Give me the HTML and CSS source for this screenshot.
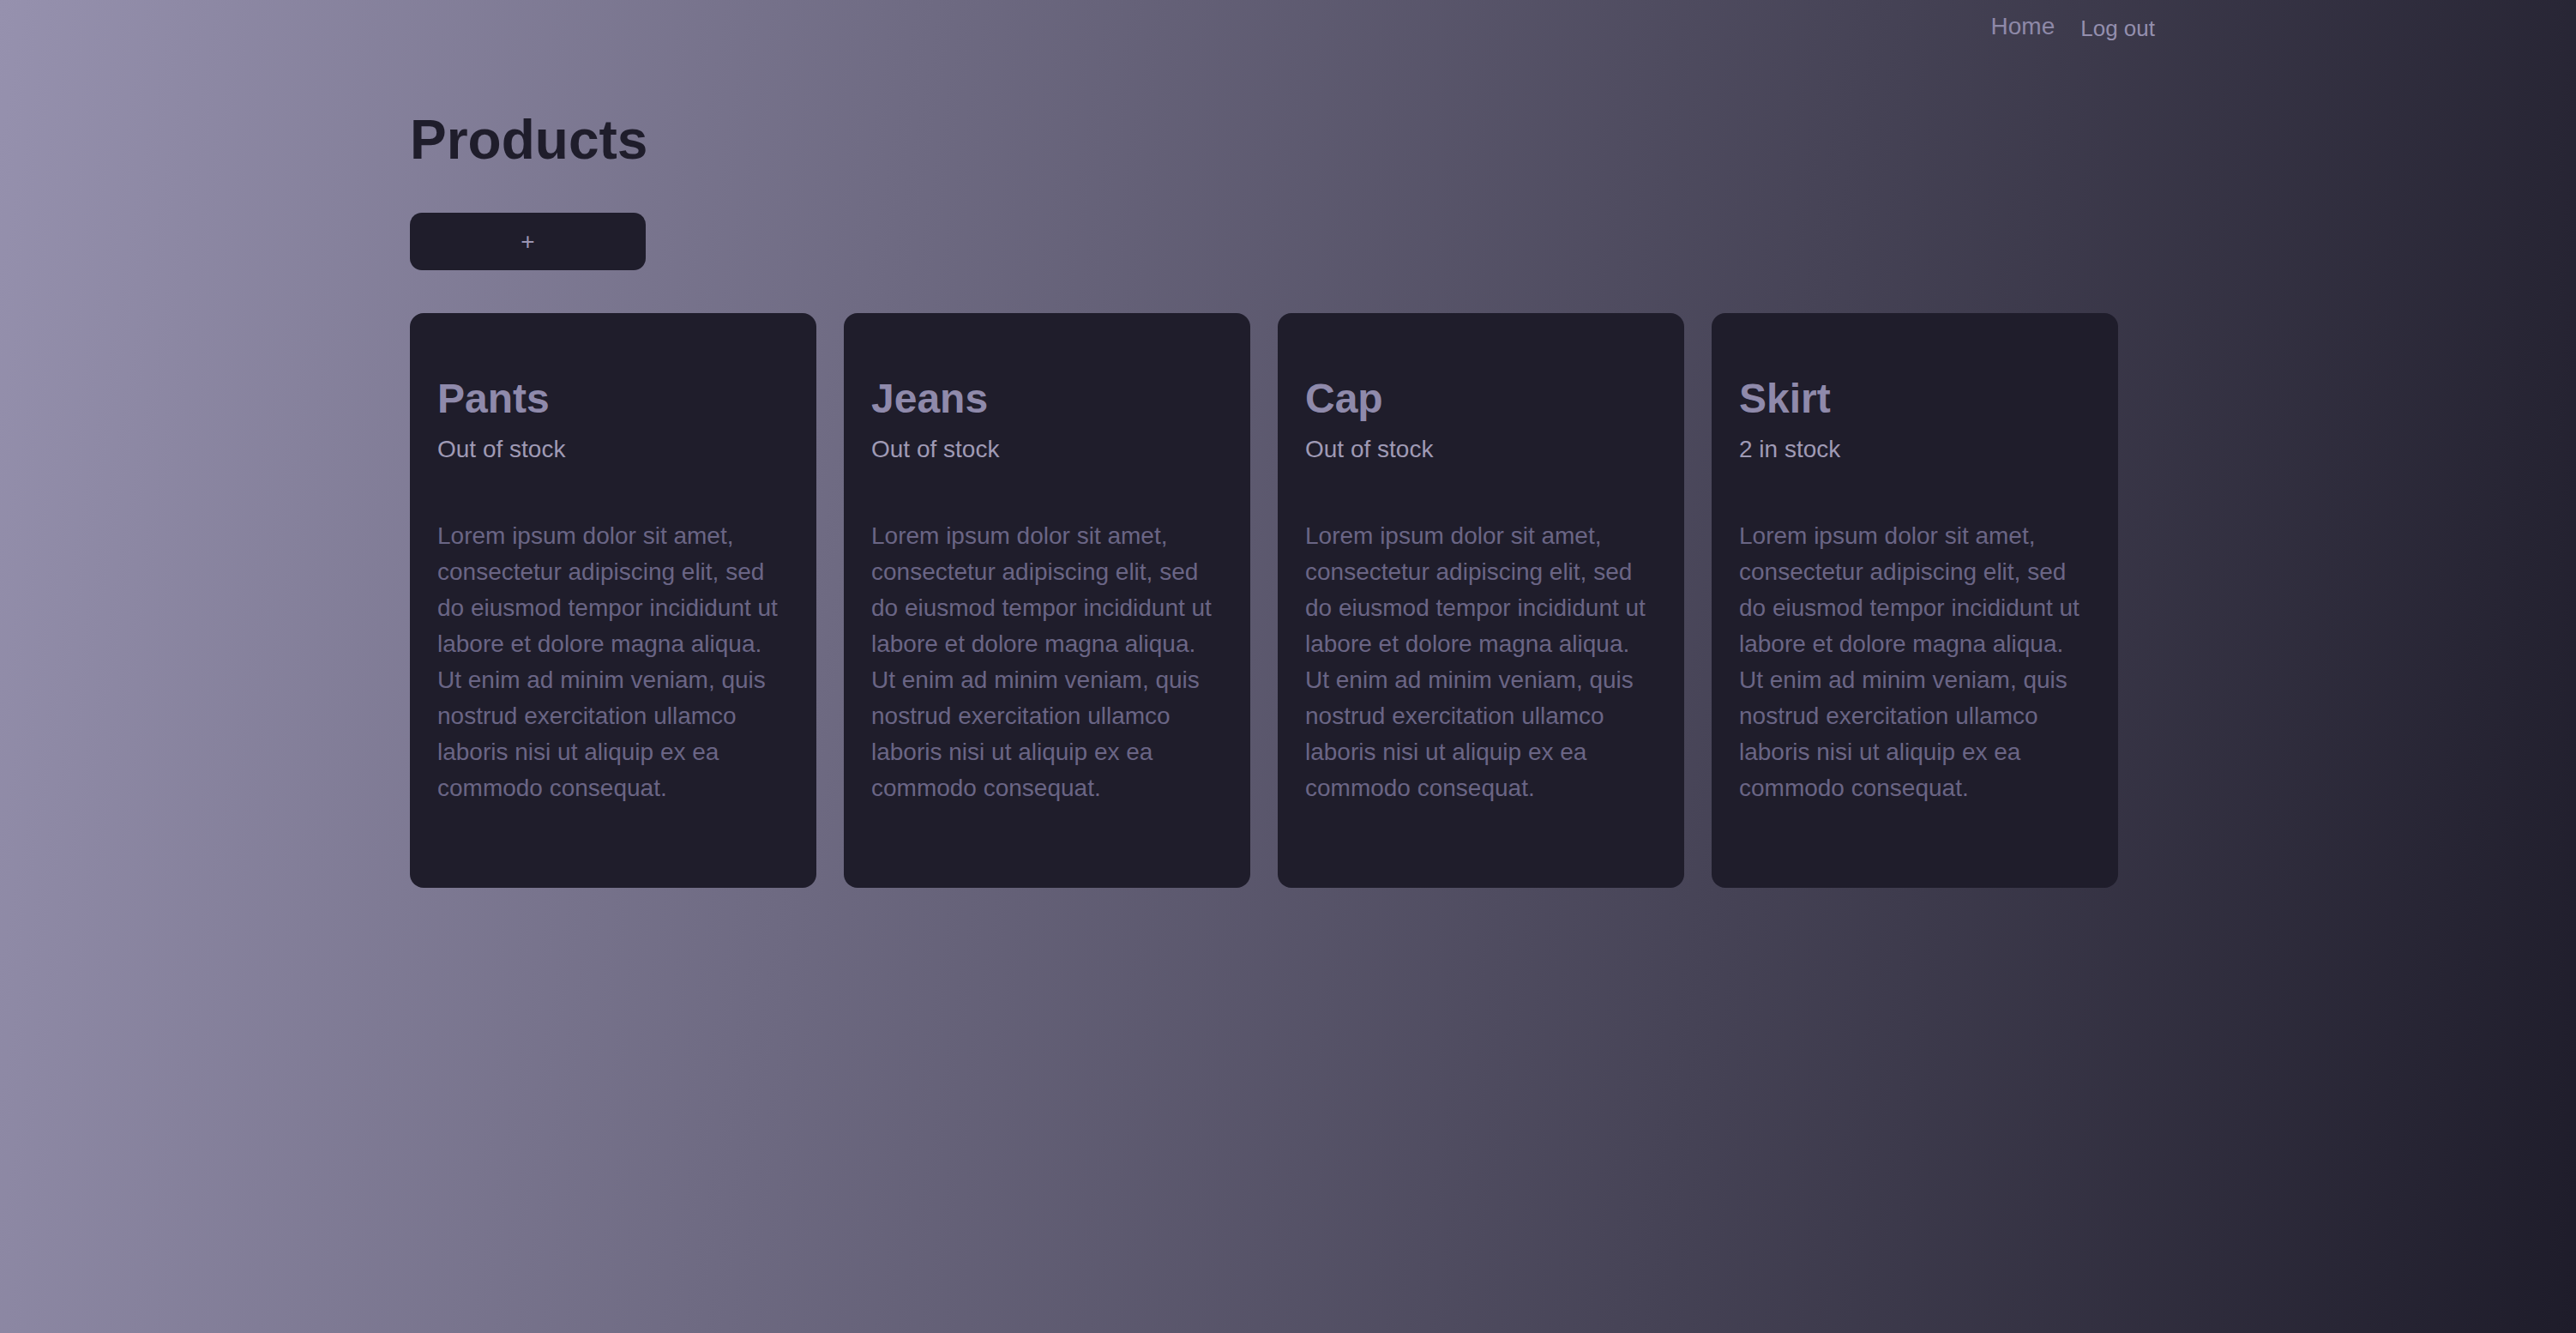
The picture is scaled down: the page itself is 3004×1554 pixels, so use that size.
FILE: index.html
```html
<!DOCTYPE html>
<html lang="en">
<head>
<meta charset="utf-8">
<title>Products</title>
<link rel="stylesheet" href="styles.css">
</head>
<body>
<header class="nav">
  <div class="nav-inner">
    <a class="nav-link" href="#">Home</a>
    <button class="nav-btn" type="button">Log out</button>
  </div>
</header>
<main class="page">
  <h1 class="title">Products</h1>
  <button class="add-btn" type="button">+</button>
  <section class="grid">
    <article class="card">
      <h2 class="card-title">Pants</h2>
      <div class="card-stock">Out of stock</div>
      <p class="card-text">Lorem ipsum dolor sit amet, consectetur adipiscing elit, sed do eiusmod tempor incididunt ut labore et dolore magna aliqua. Ut enim ad minim veniam, quis nostrud exercitation ullamco laboris nisi ut aliquip ex ea commodo consequat.</p>
    </article>
    <article class="card">
      <h2 class="card-title">Jeans</h2>
      <div class="card-stock">Out of stock</div>
      <p class="card-text">Lorem ipsum dolor sit amet, consectetur adipiscing elit, sed do eiusmod tempor incididunt ut labore et dolore magna aliqua. Ut enim ad minim veniam, quis nostrud exercitation ullamco laboris nisi ut aliquip ex ea commodo consequat.</p>
    </article>
    <article class="card">
      <h2 class="card-title">Cap</h2>
      <div class="card-stock">Out of stock</div>
      <p class="card-text">Lorem ipsum dolor sit amet, consectetur adipiscing elit, sed do eiusmod tempor incididunt ut labore et dolore magna aliqua. Ut enim ad minim veniam, quis nostrud exercitation ullamco laboris nisi ut aliquip ex ea commodo consequat.</p>
    </article>
    <article class="card">
      <h2 class="card-title">Skirt</h2>
      <div class="card-stock">2 in stock</div>
      <p class="card-text">Lorem ipsum dolor sit amet, consectetur adipiscing elit, sed do eiusmod tempor incididunt ut labore et dolore magna aliqua. Ut enim ad minim veniam, quis nostrud exercitation ullamco laboris nisi ut aliquip ex ea commodo consequat.</p>
    </article>
  </section>
</main>
</body>
</html>
```
FILE: styles.css
```css
html, body {
  margin: 0;
  padding: 0;
}

body {
  min-height: 100vh;
  font-family: "Liberation Sans", Arial, sans-serif;
  background: linear-gradient(100deg, #9691ae 0%, #1e1c2a 100%);
  color: #8f8aab;
}

.nav {
  padding-top: 10px;
}

.nav-inner {
  max-width: 2048px;
  margin: 0 auto;
  display: flex;
  justify-content: flex-end;
  align-items: center;
  gap: 17px;
  height: 42px;
}

.nav-link {
  font-size: 28px;
  line-height: 42px;
  color: #8e89a8;
  text-decoration: none;
}

.nav-btn {
  font-family: inherit;
  font-size: 26px;
  line-height: 42px;
  color: #948fae;
  background: none;
  border: 0;
  padding: 0 13px;
  margin-top: 4px;
  cursor: pointer;
}

.page {
  max-width: 2048px;
  margin: 0 auto;
}

.title {
  margin: 74px 0 0;
  font-size: 64px;
  line-height: 74px;
  font-weight: 700;
  color: #1f1d2b;
}

.add-btn {
  display: block;
  margin-top: 48px;
  width: 275px;
  height: 67px;
  border: 0;
  border-radius: 14px;
  background: #1f1d2b;
  color: #9a95b2;
  font-family: inherit;
  font-size: 28px;
  padding: 0;
}

.grid {
  margin-top: 50px;
  display: grid;
  grid-template-columns: repeat(4, 474px);
  gap: 32px;
}

.card {
  background: #1f1d2b;
  border-radius: 16px;
  padding: 32px;
}

.card-title {
  margin: 40px 0 0;
  font-size: 48px;
  line-height: 55px;
  font-weight: 700;
  color: #8f8aab;
}

.card-stock {
  margin-top: 16px;
  font-size: 28px;
  line-height: 32px;
  color: #9f9ab5;
}

.card-text {
  margin: 64px 0 63px;
  font-size: 28px;
  line-height: 42px;
  color: #6a6585;
}
```
